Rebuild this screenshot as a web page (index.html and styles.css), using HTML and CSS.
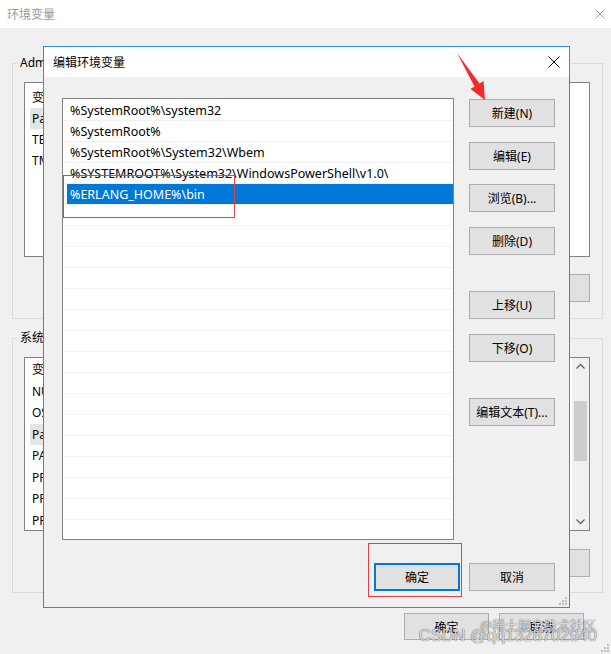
FILE: index.html
```html
<!DOCTYPE html>
<html lang="zh-CN">
<head>
    <meta charset="UTF-8">
    <meta name="viewport" content="width=device-width, initial-scale=1.0">
    <title>编辑环境变量</title>
    <link rel="stylesheet" href="styles.css">
</head>
<body>
<div class="desk">
    <!-- background window -->
    <div class="env-window">
        <div class="env-title">
            <span>环境变量</span>
            <svg class="close close-dim" viewBox="0 0 10 10"><path d="M0.5 0.5L9.5 9.5M9.5 0.5L0.5 9.5"/></svg>
        </div>

        <fieldset class="group group-user">
            <legend>Administrator 的用户变量(U)</legend>
            <div class="vlist vlist-user">
                <div class="vrow">变量</div>
                <div class="vrow vsel">Path</div>
                <div class="vrow">TEMP</div>
                <div class="vrow">TMP</div>
            </div>
            <div class="group-btns">
                <button class="btn">新建(N)...</button>
                <button class="btn">编辑(E)...</button>
                <button class="btn">删除(D)</button>
            </div>
        </fieldset>

        <fieldset class="group group-sys">
            <legend>系统变量(S)</legend>
            <div class="vlist vlist-sys">
                <div class="vrows">
                    <div class="vrow">变量</div>
                    <div class="vrow">NUMBER_OF_PROCESSORS</div>
                    <div class="vrow">OS</div>
                    <div class="vrow vsel">Path</div>
                    <div class="vrow">PATHEXT</div>
                    <div class="vrow">PROCESSOR_ARCHITECTURE</div>
                    <div class="vrow">PROCESSOR_IDENTIFIER</div>
                    <div class="vrow">PROCESSOR_LEVEL</div>
                </div>
                <div class="scrollbar">
                    <div class="sb-arrow"><svg viewBox="0 0 9 5"><polyline points="0.5,4.5 4.5,0.5 8.5,4.5"/></svg></div>
                    <div class="sb-track"><div class="sb-thumb"></div></div>
                    <div class="sb-arrow"><svg viewBox="0 0 9 5"><polyline points="0.5,0.5 4.5,4.5 8.5,0.5"/></svg></div>
                </div>
            </div>
            <div class="group-btns">
                <button class="btn">新建(W)...</button>
                <button class="btn">编辑(I)...</button>
                <button class="btn">删除(L)</button>
            </div>
        </fieldset>

        <div class="env-footer">
            <button class="btn">确定</button>
            <button class="btn">取消</button>
        </div>
    </div>

    <!-- edit dialog -->
    <div class="edit-dialog">
        <div class="dlg-title">
            <span>编辑环境变量</span>
            <svg class="close" viewBox="0 0 12 12"><path d="M0.5 0.5L11.5 11.5M11.5 0.5L0.5 11.5"/></svg>
        </div>
        <div class="dlg-main">
            <div class="path-list">
                <div class="path-row">%SystemRoot%\system32</div>
                <div class="path-row">%SystemRoot%</div>
                <div class="path-row">%SystemRoot%\System32\Wbem</div>
                <div class="path-row">%SYSTEMROOT%\System32\WindowsPowerShell\v1.0\</div>
                <div class="path-row selected">%ERLANG_HOME%\bin</div>
                <div class="path-row"></div>
                <div class="path-row"></div>
                <div class="path-row"></div>
                <div class="path-row"></div>
                <div class="path-row"></div>
                <div class="path-row"></div>
                <div class="path-row"></div>
                <div class="path-row"></div>
                <div class="path-row"></div>
                <div class="path-row"></div>
                <div class="path-row"></div>
                <div class="path-row"></div>
                <div class="path-row"></div>
                <div class="path-row"></div>
                <div class="path-row"></div>
                <div class="path-row"></div>
            </div>
            <div class="side-btns">
                <button class="btn">新建(N)</button>
                <button class="btn">编辑(E)</button>
                <button class="btn">浏览(B)...</button>
                <button class="btn">删除(D)</button>
                <button class="btn btn-gap">上移(U)</button>
                <button class="btn">下移(O)</button>
                <button class="btn btn-gap">编辑文本(T)...</button>
            </div>
        </div>
        <div class="dlg-footer">
            <button class="btn btn-default">确定</button>
            <button class="btn">取消</button>
        </div>
        <svg class="grip" viewBox="0 0 8 8">
            <rect x="6" y="0" width="2" height="2"/>
            <rect x="3" y="3" width="2" height="2"/>
            <rect x="6" y="3" width="2" height="2"/>
            <rect x="0" y="6" width="2" height="2"/>
            <rect x="3" y="6" width="2" height="2"/>
            <rect x="6" y="6" width="2" height="2"/>
        </svg>
    </div>

    <svg class="grip grip-bg" viewBox="0 0 8 8">
        <rect x="6" y="0" width="2" height="2"/>
        <rect x="3" y="3" width="2" height="2"/>
        <rect x="6" y="3" width="2" height="2"/>
        <rect x="0" y="6" width="2" height="2"/>
        <rect x="3" y="6" width="2" height="2"/>
        <rect x="6" y="6" width="2" height="2"/>
    </svg>

    <!-- annotations -->
    <div class="mark mark-row"></div>
    <div class="mark mark-ok"></div>
    <svg class="arrow" viewBox="0 0 50 60">
        <polygon points="7,8 29.5,38.5 33.5,36 35,55 20.5,44 24.5,41.5"/>
    </svg>

    <div class="watermark">
        <span class="wm-small">@稀土掘金技术社区</span>
        <span class="wm-big">CSDN @qq1328702940</span>
    </div>
</div>
</body>
</html>
```

FILE: styles.css
```css
* {
    box-sizing: border-box;
}
html, body {
    margin: 0;
}
body {
    font-family: "Segoe UI", "Noto Sans", "Noto Sans CJK SC", sans-serif;
    font-size: 12px;
    color: #000;
    background: #f0f0f0;
}
.desk {
    position: relative;
    width: 611px;
    height: 654px;
    overflow: hidden;
}

/* background window */
.env-window {
    width: 611px;
    height: 654px;
    background: #f0f0f0;
}
.env-title {
    height: 28px;
    background: #fff;
    display: flex;
    align-items: center;
    justify-content: space-between;
    padding: 0 6px 0 7px;
    color: #999;
}
.close {
    width: 12px;
    height: 12px;
    fill: none;
    stroke: #000;
    stroke-width: 1;
}
.close-dim {
    width: 10px;
    height: 10px;
    stroke: #999;
}
.group {
    margin: 0 0 0 12px;
    width: 591px;
    min-width: 0;
    border: 1px solid #dcdcdc;
    padding: 11px 12px 16px 5px;
}
.group legend {
    padding: 0 2px;
    line-height: 16px;
}
.group-user {
    margin-top: 27px;
}
.group-sys {
    margin-top: 11px;
    padding-bottom: 15px;
}
.vlist {
    margin-left: 6px;
    background: #fff;
    border: 1px solid #828282;
    overflow: hidden;
}
.vlist-user {
    height: 175px;
    padding-top: 4px;
}
.vlist-user .vrow {
    height: 21px;
    line-height: 21px;
}
.vlist-sys {
    height: 174px;
    display: flex;
}
.vrows {
    flex: 1;
    padding-top: 1px;
}
.vrow {
    height: 21.5px;
    line-height: 21.5px;
    padding-left: 7px;
    white-space: nowrap;
}
.vsel {
    width: 150px;
    margin-left: 5px;
    padding-left: 2px;
    background: #e5e5e5;
}
.scrollbar {
    width: 17px;
    background: #f0f0f0;
    display: flex;
    flex-direction: column;
}
.sb-arrow {
    height: 17px;
    display: flex;
    align-items: center;
    justify-content: center;
}
.sb-arrow svg {
    width: 9px;
    height: 5px;
    fill: none;
    stroke: #606060;
    stroke-width: 1.2;
}
.sb-track {
    flex: 1;
    padding: 26px 2px 0;
}
.sb-thumb {
    height: 60px;
    background: #cdcdcd;
}
.group-btns {
    display: flex;
    justify-content: flex-end;
    gap: 10px;
    margin-top: 17px;
}
.group-sys .group-btns {
    margin-top: 18px;
}
.group-btns .btn {
    width: 85px;
}
.env-footer {
    display: flex;
    justify-content: flex-end;
    gap: 10px;
    margin-top: 20px;
    padding-right: 27px;
}
.env-footer .btn {
    width: 85px;
    height: 27px;
}

.btn {
    font: inherit;
    color: #000;
    width: 86px;
    height: 28px;
    padding: 0;
    background: #e1e1e1;
    border: 1px solid #adadad;
    white-space: nowrap;
}
.btn-default {
    border: 2px solid #0078d7;
}

/* edit dialog */
.edit-dialog {
    position: absolute;
    left: 43px;
    top: 46px;
    width: 527px;
    height: 562px;
    background: #f0f0f0;
    border: 1px solid #2d8fd5;
    display: flex;
    flex-direction: column;
}
.dlg-title {
    flex: none;
    height: 30px;
    background: #fff;
    display: flex;
    align-items: center;
    justify-content: space-between;
    padding: 0 9px;
}
.dlg-main {
    display: flex;
    padding: 21px 14px 0 18px;
}
.path-list {
    width: 392px;
    height: 442px;
    background: #fff;
    border: 1px solid #828282;
    padding-top: 1px;
    overflow: hidden;
    font-size: 12.5px;
}
.path-row {
    height: 21px;
    line-height: 22px;
    border-bottom: 1px solid #f0f0f0;
    padding-left: 7px;
    white-space: nowrap;
}
.path-row.selected {
    margin-left: 4px;
    padding-left: 3px;
    background: #0078d7;
    color: #fff;
}
.side-btns {
    margin-left: 15px;
    padding-top: 1px;
    display: flex;
    flex-direction: column;
    gap: 14.5px;
}
.btn-gap {
    margin-top: 22px;
}
.dlg-footer {
    display: flex;
    justify-content: flex-end;
    gap: 9px;
    margin-top: 23px;
    padding: 0 14px;
}
.grip {
    position: absolute;
    right: 2px;
    bottom: 2px;
    width: 8px;
    height: 8px;
    fill: #bdbdbd;
}
.grip-bg {
    right: 2px;
    bottom: 2px;
}

/* annotations */
.mark {
    position: absolute;
    border: 1px solid #e04048;
}
.mark-row {
    left: 63px;
    top: 175px;
    width: 172px;
    height: 43px;
}
.mark-ok {
    left: 368px;
    top: 543px;
    width: 94px;
    height: 54px;
}
.arrow {
    position: absolute;
    left: 450px;
    top: 45px;
    width: 50px;
    height: 60px;
    fill: #ef2b2b;
}
.watermark {
    position: absolute;
    right: 14px;
    top: 619px;
    display: flex;
    flex-direction: column;
    align-items: flex-end;
    color: rgba(255, 255, 255, 0.8);
    text-shadow: 0 0 1px rgba(0, 0, 0, 0.6), 0 0 1px rgba(0, 0, 0, 0.4);
    line-height: 1;
}
.wm-small {
    font-size: 13px;
    margin-right: 1px;
}
.wm-big {
    font-family: "Liberation Sans", sans-serif;
    font-size: 16.5px;
    margin-top: -5px;
}
```
